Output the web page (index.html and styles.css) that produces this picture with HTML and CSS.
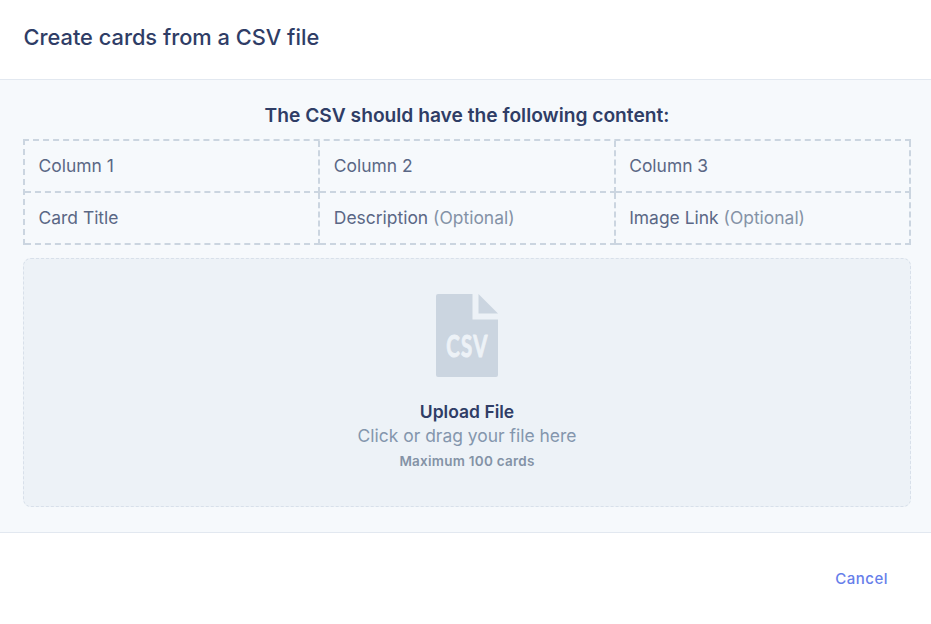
FILE: index.html
```html
<!DOCTYPE html>
<html lang="en">
<head>
  <meta charset="UTF-8">
  <title>Create cards from a CSV file</title>
  <link rel="stylesheet" href="styles.css">
</head>
<body>

  <div class="modal">
    <div class="modal-header">Create cards from a CSV file</div>

    <div class="modal-body">
      <div class="intro">The CSV should have the following content:</div>

      <div class="csv-table">
        <div class="cell">Column 1</div>
        <div class="cell">Column 2</div>
        <div class="cell">Column 3</div>
        <div class="cell">Card Title</div>
        <div class="cell">Description <span class="optional">(Optional)</span></div>
        <div class="cell">Image Link <span class="optional">(Optional)</span></div>
      </div>

      <div class="dropzone">
        <svg class="csv-icon" width="62" height="83" viewBox="0 0 62 83">
          <path d="M2 0H36.5V25.5H62V81a2 2 0 0 1-2 2H2a2 2 0 0 1-2-2V2a2 2 0 0 1 2-2Z" fill="#cbd5e0"/>
          <path d="M42.5 0L62 19.5H42.5Z" fill="#cbd5e0"/>
          <text class="csv-mark" transform="translate(31.5 62.5) scale(0.68 1)" text-anchor="middle">CSV</text>
        </svg>
        <div class="upload-title">Upload File</div>
        <div class="upload-hint">Click or drag your file here</div>
        <div class="upload-limit">Maximum 100 cards</div>
      </div>
    </div>

    <div class="modal-footer">
      <a class="cancel">Cancel</a>
    </div>
  </div>

</body>
</html>
```

FILE: styles.css
```css
body {
  margin: 0;
  background-color: #fff;
  font-family: Inter, "Liberation Sans", sans-serif;
  color: #2f3d66;
}

.modal {
  display: flex;
  flex-direction: column;
  height: 624px;
}

.modal-header {
  height: 80px;
  box-sizing: border-box;
  padding: 0 24px 5px 23.5px;
  display: flex;
  align-items: center;
  font-size: 21.8px;
  font-weight: 500;
  border-bottom: 1px solid #e2e8f0;
}

.modal-body {
  height: 453px;
  box-sizing: border-box;
  padding: 24px 20px 25px 23px;
  background-color: #f6f9fc;
  border-bottom: 1px solid #e2e8f0;
}

.intro {
  text-align: center;
  font-size: 19.2px;
  font-weight: 600;
  line-height: 22px;
  margin-bottom: 13px;
}

.csv-table {
  display: grid;
  grid-template-columns: repeat(3, 1fr);
  border-top: 2px dashed #cbd5e0;
  border-left: 2px dashed #cbd5e0;
  margin-bottom: 13px;
}

.cell {
  height: 52px;
  box-sizing: border-box;
  padding: 0 14px 2px 13.5px;
  display: flex;
  align-items: center;
  white-space: pre;
  font-size: 17.45px;
  color: #5a6785;
  border-right: 2px dashed #cbd5e0;
  border-bottom: 2px dashed #cbd5e0;
}

.optional {
  color: #8492a6;
}

.dropzone {
  height: 249px;
  box-sizing: border-box;
  padding-top: 35px;
  display: flex;
  flex-direction: column;
  align-items: center;
  background-color: #edf2f7;
  border: 1px dashed #d8e0ea;
  border-radius: 8px;
}

.csv-icon {
  margin-bottom: 24px;
}

.csv-mark {
  font-family: Lato, sans-serif;
  font-size: 30px;
  font-weight: 700;
  letter-spacing: 2px;
  fill: #edf2f7;
  stroke: #edf2f7;
  stroke-width: 1px;
  stroke-linejoin: round;
}

.upload-title {
  margin-bottom: 1px;
  font-size: 17.5px;
  font-weight: 600;
  line-height: 21px;
}

.upload-hint {
  font-size: 17.45px;
  line-height: 25px;
  color: #8496ad;
}

.upload-limit {
  margin-top: 1px;
  font-size: 13.5px;
  font-weight: 600;
  line-height: 24px;
  color: #8492a6;
  letter-spacing: 0.25px;
}

.modal-footer {
  flex: 1;
  display: flex;
  justify-content: flex-end;
  padding: 37px 43px 0 0;
}

.cancel {
  font-size: 15px;
  font-weight: 500;
  line-height: 18px;
  letter-spacing: 0.5px;
  color: #667eea;
  cursor: pointer;
}
```
